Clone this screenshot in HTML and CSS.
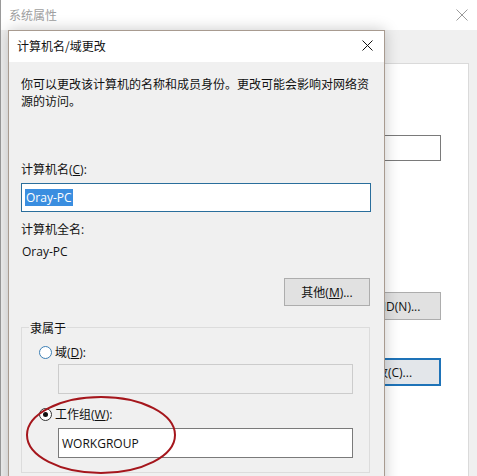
FILE: index.html
```html
<!DOCTYPE html>
<html lang="zh-CN">
<head>
<meta charset="utf-8">
<title>计算机名/域更改</title>
<link rel="stylesheet" href="styles.css">
</head>
<body>
<div class="desk">
  <div class="win-back">
    <div class="back-title">
      <span class="back-title-text">系统属性</span>
      <svg class="back-close" width="12" height="12" viewBox="0 0 12 12"><path d="M0.5 0.5L11.5 11.5M11.5 0.5L0.5 11.5" stroke="#9a9a9a" stroke-width="1"/></svg>
    </div>
    <div class="back-body">
      <div class="tab-panel">
        <div class="back-input"></div>
        <div class="back-btn btn-id">网络 ID(N)...</div>
        <div class="back-btn btn-change">更改(C)...</div>
      </div>
    </div>
  </div>

  <div class="dialog">
    <div class="dlg-title">
      <span>计算机名/域更改</span>
      <svg class="dlg-close" width="11" height="11" viewBox="0 0 11 11"><path d="M0.5 0.5L10.5 10.5M10.5 0.5L0.5 10.5" stroke="#111" stroke-width="1"/></svg>
    </div>
    <div class="dlg-body">
      <p class="desc">你可以更改该计算机的名称和成员身份。更改可能会影响对网络资源的访问。</p>
      <div class="label lbl-name">计算机名(<u>C</u>):</div>
      <div class="textbox focused"><span class="sel">Oray-PC</span></div>
      <div class="label lbl-full">计算机全名:</div>
      <div class="label val-full">Oray-PC</div>
      <div class="btn-row"><div class="btn">其他(<u>M</u>)...</div></div>
      <fieldset class="group">
        <legend>隶属于</legend>
        <div class="radio-row r1"><span class="radio"></span><span>域(<u>D</u>):</span></div>
        <div class="textbox disabled"></div>
        <div class="radio-row r2"><span class="radio checked"></span><span>工作组(<u>W</u>):</span></div>
        <div class="textbox wg">WORKGROUP</div>
      </fieldset>
    </div>
  </div>

  <svg class="annot" width="477" height="476" viewBox="0 0 477 476">
    <ellipse cx="101" cy="435" rx="74" ry="38" fill="none" stroke="#a5161c" stroke-width="2"/>
  </svg>
</div>
</body>
</html>
```

FILE: styles.css
```css
* { box-sizing: border-box; }
html, body { margin: 0; padding: 0; }
body {
  width: 477px;
  height: 476px;
  overflow: hidden;
  background: #f0f0f0;
  font-family: "Segoe UI", "Open Sans", "Noto Sans CJK SC", sans-serif;
  font-size: 12px;
  color: #111;
}
.desk {
  position: relative;
  width: 477px;
  height: 476px;
  overflow: hidden;
}

/* background window */
.win-back {
  position: absolute;
  left: 0;
  top: 0;
  width: 477px;
  height: 476px;
  display: flex;
  flex-direction: column;
  border-left: 1px solid #9a9a9a;
}
.back-title {
  height: 30px;
  background: #fff;
  display: flex;
  align-items: center;
  justify-content: space-between;
  padding: 0 9px 1px 8px;
  font-family: "Noto Sans CJK SC", sans-serif;
}
.back-title-text { color: #a0a0a0; line-height: 17px; }
.back-close { display: block; margin-top: 1px; }
.back-body {
  flex: 1;
  background: #f0f0f0;
  padding: 33px 8px 0 16px;
  display: flex;
}
.tab-panel {
  flex: 1;
  background: #fff;
  border: 1px solid #dadada;
  border-bottom: none;
  display: flex;
  flex-direction: column;
  align-items: flex-end;
  padding: 71px 27px 0 0;
}
.back-input {
  width: 260px;
  height: 26px;
  border: 1px solid #7a7a7a;
  background: #fff;
}
.back-btn {
  width: 106px;
  height: 28px;
  border: 1px solid #adadad;
  background: #e1e1e1;
  display: flex;
  align-items: center;
  justify-content: center;
  font-family: "Segoe UI", "Open Sans", "Noto Sans CJK SC", sans-serif;
  line-height: 17px;
}
.btn-id { margin-top: 131px; }
.btn-change {
  margin-top: 38px;
  height: 28px;
  border: 2px solid #1e73b8;
  background: #e3e6ea;
}

/* front dialog */
.dialog {
  position: absolute;
  left: 8px;
  top: 30px;
  width: 377px;
  height: 470px;
  border: 1px solid #a89b90;
  background: #f0f0f0;
  box-shadow: 0 0 14px rgba(0, 0, 0, 0.22);
  display: flex;
  flex-direction: column;
}
.dlg-title {
  height: 31px;
  background: #fff;
  display: flex;
  align-items: center;
  justify-content: space-between;
  padding: 0 11px 3px 8px;
  font-family: "Noto Sans CJK SC", sans-serif;
  line-height: 17px;
}
.dlg-close { display: block; }
.dlg-body {
  flex: 1;
  padding: 13px 13px 0 12px;
  font-family: "Segoe UI", "Open Sans", "Noto Sans CJK SC", sans-serif;
  line-height: 17px;
}
.desc {
  margin: 0;
  font-family: "Noto Sans CJK SC", sans-serif;
  width: 352px;
}
.label { line-height: 17px; }
.lbl-name { margin-top: 52px; }
.lbl-full { margin-top: 9px; }
.val-full { margin-top: 5px; padding-left: 1px; }
.textbox {
  height: 29px;
  border: 1px solid #7a7a7a;
  background: #fff;
  display: flex;
  align-items: center;
  padding-left: 3px;
}
.focused {
  margin-top: 5px;
  width: 350px;
  border-color: #2a6e9c;
}
.sel {
  background: #3a8ee0;
  color: #fff;
  line-height: 17px;
  padding: 0 1px;
}
.btn-row {
  display: flex;
  justify-content: flex-end;
  margin-top: 18px;
  padding-right: 1px;
}
.btn {
  width: 86px;
  height: 28px;
  border: 1px solid #adadad;
  background: #e1e1e1;
  display: flex;
  align-items: center;
  justify-content: center;
}

.group {
  margin: 13px 1px 0 0;
  border: 1px solid #dcdcdc;
  padding: 8px 17px 14px 17px;
  min-width: 0;
}
.group legend {
  padding: 0 1px;
  margin-left: -10px;
  line-height: 17px;
  font-family: "Noto Sans CJK SC", sans-serif;
}
.radio-row {
  display: flex;
  align-items: center;
  gap: 3px;
  height: 17px;
}
.r2 { margin-top: 12px; }
.radio {
  width: 13px;
  height: 13px;
  border-radius: 50%;
  border: 1px solid #333;
  background: #fff;
  position: relative;
}
.r1 .radio { border-color: #3c7fb5; }
.radio.checked::after {
  content: "";
  position: absolute;
  left: 3px;
  top: 3px;
  width: 5px;
  height: 5px;
  border-radius: 50%;
  background: #111;
}
.disabled {
  margin: 3px 0 0 19px;
  width: 295px;
  height: 30px;
  background: #f0f0f0;
  border-color: #cccccc;
}
.wg {
  margin: 5px 0 0 19px;
  width: 295px;
  height: 30px;
}

.annot {
  position: absolute;
  left: 0;
  top: 0;
  pointer-events: none;
}
```
